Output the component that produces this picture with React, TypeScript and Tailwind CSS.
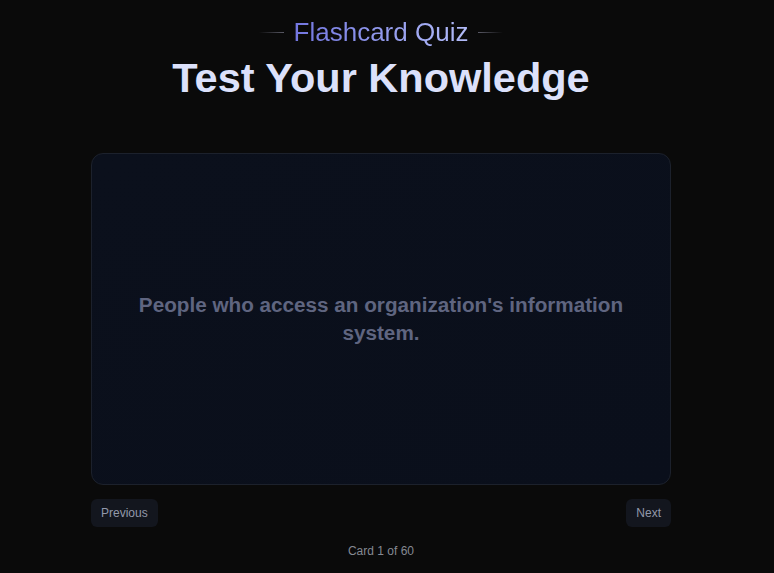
import React, { useState } from "react";

const cards = [
  "People who access an organization's information system.",
];

export default function App() {
  const [index, setIndex] = useState(0);
  const total = 60;

  return (
    <div
      className="min-h-screen w-full bg-[#0a0a0a] flex flex-col items-center pt-[14px] pr-3"
      style={{ fontFamily: '"Liberation Sans", Arial, sans-serif' }}
    >
      <div className="flex items-center justify-center gap-[10px]">
        <span className="block h-px w-[25px] bg-gradient-to-r from-transparent to-[#5a5a66]" />
        <span className="text-[26px] leading-[36px] bg-gradient-to-r from-[#7376e0] to-[#b3bcf8] bg-clip-text text-transparent">
          Flashcard Quiz
        </span>
        <span className="block h-px w-[25px] bg-gradient-to-l from-transparent to-[#5a5a66]" />
      </div>
      <h1 className="mt-1 text-[41.5px] leading-[48px] font-bold text-[#dce1fb]">
        Test Your Knowledge
      </h1>

      <div className="mt-[51px] w-[580px]">
        <div className="h-[332px] rounded-xl border border-[#1c212c] bg-gradient-to-br from-[#0b101c] to-[#0a0f1b] flex items-center justify-center px-10">
          <p className="text-[20.7px] leading-7 font-bold text-center text-[#5f6580]">
            {cards[index % cards.length]}
          </p>
        </div>

        <div className="mt-[14px] flex items-center justify-between">
          <button
            onClick={() => setIndex((i) => Math.max(0, i - 1))}
            className="rounded-md bg-[#13161e] px-2.5 py-1.5 text-xs leading-4 text-[#9298aa]"
          >
            Previous
          </button>
          <button
            onClick={() => setIndex((i) => Math.min(total - 1, i + 1))}
            className="rounded-md bg-[#13161e] px-2.5 py-1.5 text-xs leading-4 text-[#9298aa]"
          >
            Next
          </button>
        </div>

        <p className="mt-4 text-center text-xs leading-4 text-[#858992]">
          Card {index + 1} of {total}
        </p>
      </div>
    </div>
  );
}
